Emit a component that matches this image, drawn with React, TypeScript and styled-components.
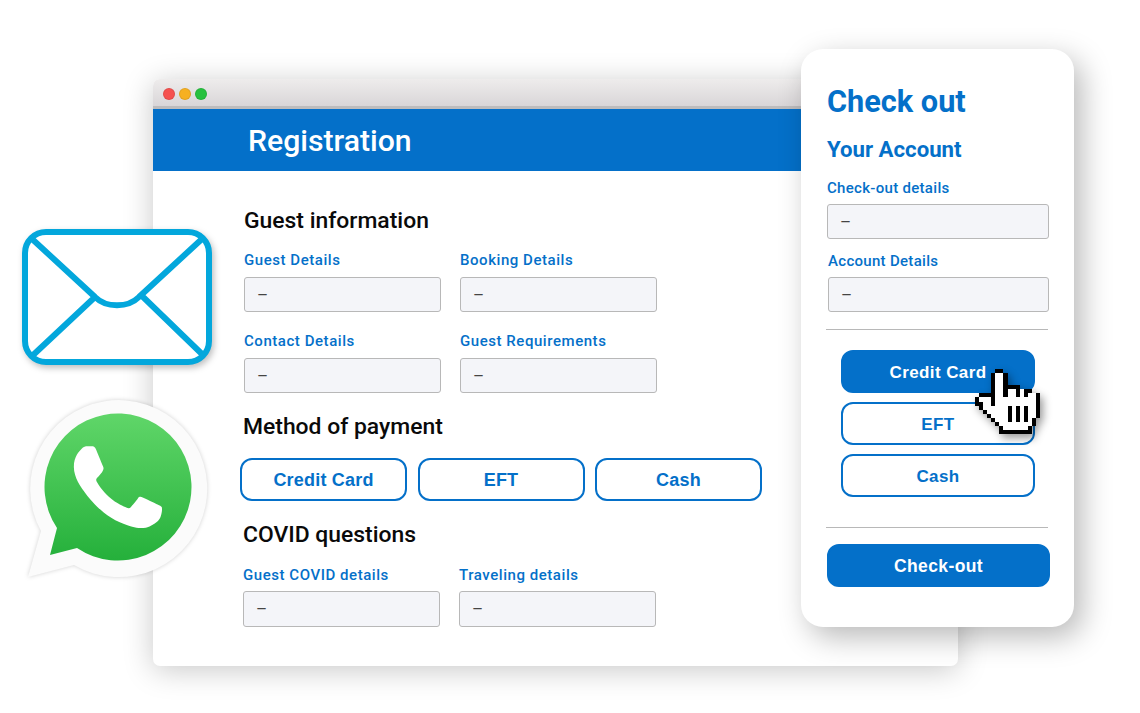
import React from "react";
import styled, { createGlobalStyle } from "styled-components";

const BLUE = "#0470c9";

const HAND = [
  "     ##         ",
  "    #..#        ",
  "    #..#        ",
  "    #..#        ",
  "    #..####     ",
  "    #..#..#.##  ",
  " ####..#..#.#..#",
  "#...#..........#",
  "##..#..........#",
  " #......#.#.#..#",
  "  #.....#.#.#..#",
  "   #....#.#.#..#",
  "    #...#.#.#.# ",
  "     #........# ",
  "      #......#  ",
  "      ########  ",
];

const EnvelopeIcon = () => (
  <EnvelopeSvg viewBox="0 0 190 136">
    <rect x="3" y="3" width="184" height="130" rx="21" fill="#fff" stroke="#03a7dc" strokeWidth="6" />
    <path
      d="M9 9 L73 68 C84 79 106 79 117 68 L181 9 M73 68 L9 128 M119 66 L182 127"
      fill="none"
      stroke="#03a7dc"
      strokeWidth="6"
    />
  </EnvelopeSvg>
);

const WhatsappIcon = () => (
  <WhatsappSvg viewBox="0 0 190 190">
    <defs>
      <linearGradient id="wa" gradientUnits="userSpaceOnUse" x1="0" y1="21" x2="0" y2="168">
        <stop offset="0" stopColor="#60d669" />
        <stop offset="1" stopColor="#25b03b" />
      </linearGradient>
    </defs>
    <path d="M19 139 L6 185 L52 173 A88.5 88.5 0 1 0 19 139 Z" fill="#fbfbfb" />
    <path d="M35 136 L28 163 L55 156 A73.5 73.5 0 1 0 35 136 Z" fill="url(#wa)" />
    <path
      transform="translate(8 7.5) scale(7.3)"
      fill="#fff"
      d="M17.472 14.382c-.297-.149-1.758-.867-2.03-.967-.273-.099-.471-.148-.67.15-.197.297-.767.966-.94 1.164-.173.199-.347.223-.644.075-.297-.15-1.255-.463-2.39-1.475-.883-.788-1.48-1.761-1.653-2.059-.173-.297-.018-.458.13-.606.134-.133.298-.347.446-.52.149-.174.198-.298.298-.497.099-.198.05-.371-.025-.52-.075-.149-.669-1.612-.916-2.207-.242-.579-.487-.5-.669-.51-.173-.008-.371-.01-.57-.01-.198 0-.52.074-.792.372-.272.297-1.04 1.016-1.04 2.479 0 1.462 1.065 2.875 1.213 3.074.149.198 2.096 3.2 5.077 4.487.709.306 1.262.489 1.694.625.712.227 1.36.195 1.871.118.571-.085 1.758-.719 2.006-1.413.248-.694.248-1.289.173-1.413-.074-.124-.272-.198-.57-.347z"
    />
  </WhatsappSvg>
);

const HandCursor = () => (
  <CursorSvg viewBox="0 0 16 16" shapeRendering="crispEdges">
    {HAND.flatMap((row, y) =>
      row.split("").map((c, x) =>
        c === " " ? null : <rect key={`${x}-${y}`} x={x} y={y} width="1" height="1" fill={c === "#" ? "#000" : "#fff"} />
      )
    )}
  </CursorSvg>
);

const Field = ({ label, compact }: { label: string; compact?: boolean }) => (
  <div>
    <FieldLabel $compact={compact}>{label}</FieldLabel>
    <FieldInput $compact={compact}>–</FieldInput>
  </div>
);

const App = () => (
  <Canvas>
    <GlobalStyle />
    <Browser>
      <TitleBar>
        <Light $color="#f5514f" />
        <Light $color="#f6b021" />
        <Light $color="#27c13f" />
      </TitleBar>
      <Banner>Registration</Banner>
      <Body>
        <Heading>Guest information</Heading>
        <FieldGrid>
          <Field label="Guest Details" />
          <Field label="Booking Details" />
          <Field label="Contact Details" />
          <Field label="Guest Requirements" />
        </FieldGrid>
        <Heading $top={20} $shift={-1}>Method of payment</Heading>
        <PayRow>
          <PayButton $width={167}>Credit Card</PayButton>
          <PayButton $width={167}>EFT</PayButton>
          <PayButton $width={167}>Cash</PayButton>
        </PayRow>
        <Heading $top={20} $shift={-1}>COVID questions</Heading>
        <FieldGrid $shift={-1} $top={17}>
          <Field label="Guest COVID details" compact />
          <Field label="Traveling details" compact />
        </FieldGrid>
      </Body>
    </Browser>

    <EnvelopeIcon />
    <WhatsappIcon />

    <Card>
      <CardTitle>Check out</CardTitle>
      <CardSubtitle>Your Account</CardSubtitle>
      <CardFields>
        <Field label="Check-out details" />
        <Field label="Account Details" />
      </CardFields>
      <Divider $top={16.5} />
      <CardButtons>
        <PayButton $width={194} $filled $size={17}>Credit Card</PayButton>
        <PayButton $width={194} $size={17}>EFT</PayButton>
        <PayButton $width={194} $size={17}>Cash</PayButton>
      </CardButtons>
      <Divider $top={29.5} />
      <PayButton $width={223} $filled $size={17.5} $top={16}>Check-out</PayButton>
    </Card>

    <HandCursor />
  </Canvas>
);

export default App;

const GlobalStyle = createGlobalStyle`
  html, body {
    margin: 0;
    padding: 0;
    background: #fff;
  }
  body {
    font-family: Roboto, "Liberation Sans", sans-serif;
  }
`;

const Canvas = styled.div`
  position: relative;
  width: 1140px;
  height: 713px;
  overflow: hidden;
  background: #fff;
`;

const Browser = styled.section`
  position: absolute;
  left: 153px;
  top: 79px;
  width: 805px;
  height: 587px;
  background: #fff;
  border-radius: 7px;
  box-shadow: 0 4px 30px rgba(0, 0, 0, 0.22);
  overflow: hidden;
`;

const TitleBar = styled.div`
  box-sizing: border-box;
  height: 30px;
  display: flex;
  align-items: center;
  gap: 4px;
  padding: 3px 0 0 10px;
  background: linear-gradient(#eeecec, #d9d6d8);
  border-bottom: 3px solid #bdbcbd;
`;

const Light = styled.span<{ $color: string }>`
  box-sizing: border-box;
  width: 12px;
  height: 12px;
  border-radius: 50%;
  background: ${({ $color }) => $color};
  border: 1px solid rgba(0, 0, 0, 0.08);
`;

const Banner = styled.header`
  height: 62px;
  display: flex;
  align-items: center;
  padding-left: 95px;
  background: ${BLUE};
  color: #fff;
  font-size: 30.2px;
  font-weight: 500;
`;

const Body = styled.div`
  padding: 36px 0 0 91px;
`;

const Heading = styled.h2<{ $top?: number; $shift?: number }>`
  margin: ${({ $top }) => $top ?? 0}px 0 0 ${({ $shift }) => $shift ?? 0}px;
  font-size: 22.9px;
  line-height: 28px;
  font-weight: 500;
  color: #0a0a0a;
`;

const FieldGrid = styled.div<{ $shift?: number; $top?: number }>`
  display: grid;
  grid-template-columns: 197px 197px;
  column-gap: 19px;
  row-gap: 20px;
  margin: ${({ $top }) => $top ?? 16}px 0 0 ${({ $shift }) => $shift ?? 0}px;
`;

const FieldLabel = styled.div<{ $compact?: boolean }>`
  font-size: 15px;
  letter-spacing: 0.55px;
  line-height: 18px;
  font-weight: 500;
  color: ${BLUE};
  margin-bottom: ${({ $compact }) => ($compact ? 7 : 8)}px;
  white-space: nowrap;
`;

const FieldInput = styled.div<{ $compact?: boolean }>`
  box-sizing: border-box;
  height: ${({ $compact }) => ($compact ? 36 : 35)}px;
  padding-left: 12px;
  display: flex;
  align-items: center;
  background: #f4f5f9;
  border: 1.5px solid #b8b8b8;
  border-radius: 3px;
  color: #444;
  font-size: 17px;
`;

const PayRow = styled.div`
  display: flex;
  gap: 10.5px;
  margin: 17px 0 0 -4px;
`;

const PayButton = styled.button<{ $width: number; $filled?: boolean; $size?: number; $top?: number }>`
  box-sizing: border-box;
  display: block;
  width: ${({ $width }) => $width}px;
  height: 43px;
  margin-top: ${({ $top }) => $top ?? 0}px;
  padding: 2px 0 0;
  border: 2px solid ${BLUE};
  border-radius: 12px;
  background: ${({ $filled }) => ($filled ? BLUE : "#fff")};
  color: ${({ $filled }) => ($filled ? "#fff" : BLUE)};
  font-family: "Liberation Sans", Arial, sans-serif;
  font-size: ${({ $size }) => $size ?? 18}px;
  letter-spacing: ${({ $size }) => ($size ? 0.4 : 0.2)}px;
  font-weight: 700;
`;

const Card = styled.aside`
  position: absolute;
  left: 801px;
  top: 49px;
  box-sizing: border-box;
  width: 273px;
  height: 578px;
  padding: 34px 0 0 26px;
  background: #fff;
  border-radius: 22px;
  box-shadow: 8px 10px 30px rgba(0, 0, 0, 0.28);
`;

const CardTitle = styled.h1`
  margin: 0;
  font-size: 30.7px;
  line-height: 38px;
  font-weight: 700;
  color: ${BLUE};
`;

const CardSubtitle = styled.h2`
  margin: 14px 0 0;
  font-size: 22.2px;
  line-height: 28px;
  font-weight: 700;
  color: ${BLUE};
`;

const CardFields = styled.div`
  display: grid;
  grid-template-columns: 222px;
  row-gap: 13px;
  margin-top: 16px;

  & > div:nth-child(2) {
    margin-left: 1px;
  }

  ${FieldLabel} {
    letter-spacing: 0.3px;
    margin-bottom: 7px;
  }
`;

const Divider = styled.hr<{ $top?: number }>`
  width: 222px;
  height: 1.5px;
  margin: ${({ $top }) => $top ?? 17}px 0 0 -1px;
  border: 0;
  background: #b8b8b8;
`;

const CardButtons = styled.div`
  display: flex;
  flex-direction: column;
  gap: 9px;
  margin: 20px 0 0 14px;
`;

const EnvelopeSvg = styled.svg`
  position: absolute;
  left: 22px;
  top: 229px;
  width: 190px;
  height: 136px;
  filter: drop-shadow(2px 3px 3px rgba(0, 0, 0, 0.25));
`;

const WhatsappSvg = styled.svg`
  position: absolute;
  left: 22px;
  top: 392px;
  width: 190px;
  height: 190px;
  filter: drop-shadow(0 0 2px rgba(0, 0, 0, 0.18));
`;

const CursorSvg = styled.svg`
  position: absolute;
  left: 975px;
  top: 369px;
  width: 65px;
  height: 65px;
  filter: drop-shadow(3px 4px 4px rgba(0, 0, 0, 0.4));
`;
